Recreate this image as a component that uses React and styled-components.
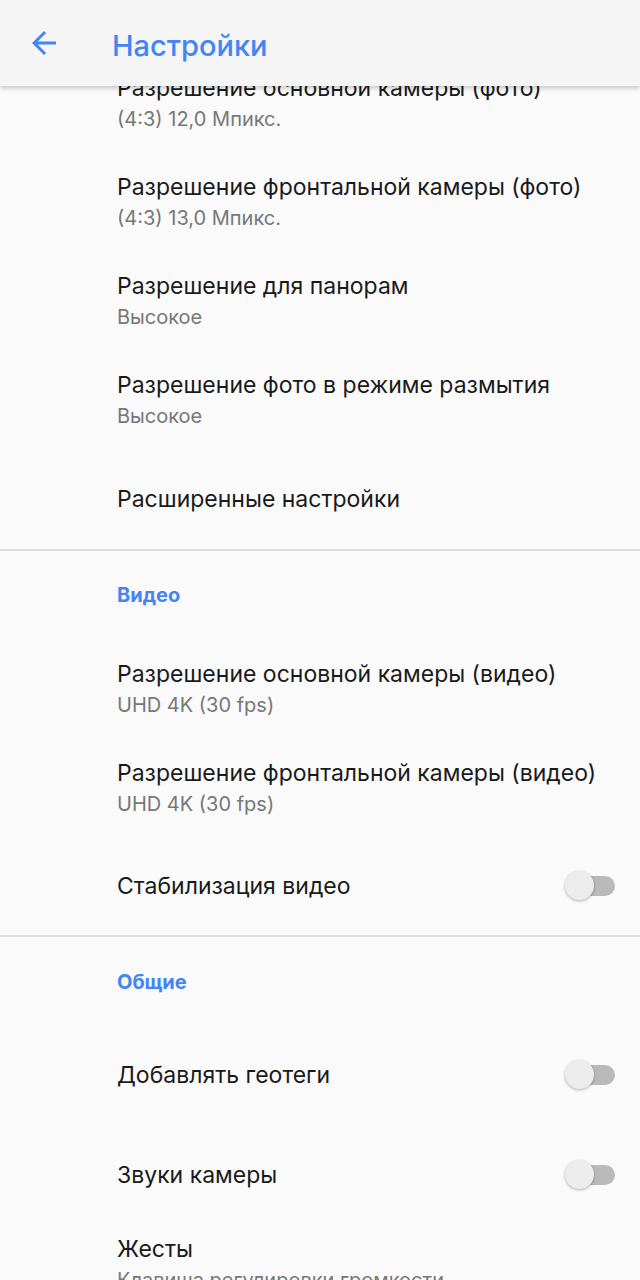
import React from "react";
import styled, { createGlobalStyle } from "styled-components";

const Global = createGlobalStyle`
  html, body { margin: 0; padding: 0; background: #fafafa; }
  body { font-family: Inter, Roboto, "Noto Sans", sans-serif; -webkit-font-smoothing: antialiased; }
`;

const Page = styled.div`
  width: 640px;
  height: 1280px;
  overflow: hidden;
  background: #fafafa;
  position: relative;
`;

const Toolbar = styled.header`
  position: absolute;
  top: 0;
  left: 0;
  right: 0;
  height: 86px;
  background: #f5f5f5;
  box-shadow: 0 2px 5px rgba(0, 0, 0, 0.22);
  display: flex;
  align-items: center;
  z-index: 2;
`;

const BackButton = styled.div`
  width: 112px;
  height: 86px;
  display: flex;
  align-items: center;
  padding-left: 26px;
  padding-top: 0px;
  box-sizing: border-box;
`;

const Title = styled.h1`
  margin: 0;
  padding-top: 4px;
  font-size: 29px;
  font-weight: 500;
  color: #4285f4;
`;

const Content = styled.main`
  padding-top: 53px;
`;

const Section = styled.section`
  border-bottom: ${(p) => (p.$last ? "none" : "2px solid #dedede")};
`;

const SectionHeader = styled.div`
  height: 88px;
  padding-left: 117px;
  padding-top: ${(p) => p.$top || 32}px;
  box-sizing: border-box;
  font-size: 20px;
  font-weight: 700;
  color: #4285f4;
`;

const Item = styled.div`
  height: ${(p) => p.$h || 99}px;
  display: flex;
  align-items: center;
  padding-left: 117px;
  padding-right: 24px;
  box-sizing: border-box;
`;

const Texts = styled.div`
  flex: 1;
  display: flex;
  flex-direction: column;
`;

const ItemTitle = styled.div`
  font-size: 23px;
  color: #1a1a1a;
  line-height: 30px;
`;

const ItemSub = styled.div`
  font-size: 20px;
  color: #777;
  line-height: 28px;
  margin-top: 2px;
`;

const Switch = styled.div`
  position: relative;
  width: 50px;
  height: 30px;
  flex: none;
  margin-right: 1px;
`;

const Track = styled.div`
  position: absolute;
  left: 14px;
  right: 0;
  top: 5px;
  height: 20px;
  border-radius: 10px;
  background: #b9b9b9;
`;

const Thumb = styled.div`
  position: absolute;
  left: 0;
  top: 0;
  width: 29px;
  height: 29px;
  border-radius: 50%;
  background: #ececec;
  box-shadow: 0 1px 3px rgba(0, 0, 0, 0.3);
`;

const Toggle = () => (
  <Switch>
    <Track />
    <Thumb />
  </Switch>
);

const Row = ({ title, sub, toggle, h }) => (
  <Item $h={h}>
    <Texts>
      <ItemTitle>{title}</ItemTitle>
      {sub && <ItemSub>{sub}</ItemSub>}
    </Texts>
    {toggle && <Toggle />}
  </Item>
);

export default function App() {
  return (
    <Page>
      <Global />
      <Toolbar>
        <BackButton>
          <svg width="36" height="36" viewBox="0 0 24 24">
            <path
              d="M20 11H7.83l5.59-5.59L12 4l-8 8 8 8 1.41-1.41L7.83 13H20v-2z"
              fill="#4285f4"
            />
          </svg>
        </BackButton>
        <Title>Настройки</Title>
      </Toolbar>
      <Content>
        <Section>
          <Row title="Разрешение основной камеры (фото)" sub="(4:3) 12,0 Мпикс." h={99} />
          <Row title="Разрешение фронтальной камеры (фото)" sub="(4:3) 13,0 Мпикс." h={99} />
          <Row title="Разрешение для панорам" sub="Высокое" h={100} />
          <Row title="Разрешение фото в режиме размытия" sub="Высокое" h={98} />
          <Row title="Расширенные настройки" h={100} />
        </Section>
        <Section>
          <SectionHeader $top={32}>Видео</SectionHeader>
          <Row title="Разрешение основной камеры (видео)" sub="UHD 4K (30 fps)" h={100} />
          <Row title="Разрешение фронтальной камеры (видео)" sub="UHD 4K (30 fps)" h={98} />
          <Row title="Стабилизация видео" toggle h={98} />
        </Section>
        <Section $last>
          <SectionHeader $top={33}>Общие</SectionHeader>
          <Row title="Добавлять геотеги" toggle h={100} />
          <Row title="Звуки камеры" toggle h={99} />
          <Row title="Жесты" sub="Клавиша регулировки громкости" h={80} />
        </Section>
      </Content>
    </Page>
  );
}
